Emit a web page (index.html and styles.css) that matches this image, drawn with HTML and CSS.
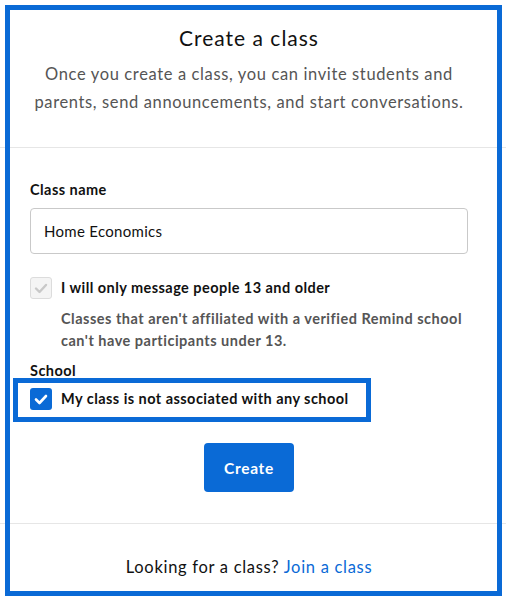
FILE: index.html
```html
<!DOCTYPE html>
<html>
<head>
<meta charset="utf-8">
<link rel="stylesheet" href="styles.css">
</head>
<body>
<div class="page">
  <header class="head">
    <h1 class="title">Create a class</h1>
    <p class="sub">Once you create a class, you can invite students and parents, send announcements, and start conversations.</p>
  </header>
  <section class="form">
    <label class="label">Class name</label>
    <div class="input">Home Economics</div>
    <div class="check-row">
      <span class="box box-disabled">
        <svg width="22" height="22" viewBox="0 0 22 22"><polyline points="6,11.5 9.5,15 16,8" fill="none" stroke="#c8c8c8" stroke-width="2.4" stroke-linecap="round" stroke-linejoin="round"/></svg>
      </span>
      <span class="check-label">I will only message people 13 and older</span>
    </div>
    <p class="help">Classes that aren't affiliated with a verified Remind school can't have participants under 13.</p>
    <div class="label school">School</div>
    <div class="check-row school-row">
      <span class="box box-on">
        <svg width="22" height="22" viewBox="0 0 22 22"><polyline points="6,11.5 9.5,15 16,8" fill="none" stroke="#fff" stroke-width="2.6" stroke-linecap="round" stroke-linejoin="round"/></svg>
      </span>
      <span class="check-label">My class is not associated with any school</span>
    </div>
    <div class="actions"><button class="btn">Create</button></div>
  </section>
  <footer class="foot">Looking for a class? <a class="link">Join a class</a></footer>
  <div class="frame"></div>
  <div class="mark"></div>
</div>
</body>
</html>
```
FILE: styles.css
```css
* { box-sizing: border-box; }
html, body { margin: 0; padding: 0; background: #fff; }
body { font-family: Lato, "Open Sans", sans-serif; color: #111; }
.page { position: relative; width: 506px; height: 602px; overflow: hidden; }
.head { padding: 24px 28px 31px 20px; text-align: center; border-bottom: 1px solid #e6e6e6; }
.title { margin: 0; font-size: 21px; font-weight: 400; line-height: 28px; color: #111; letter-spacing: 1px; }
.sub { margin: 8px auto 0; max-width: 430px; font-size: 16.5px; line-height: 28px; color: #555; letter-spacing: 0.63px; }
.form { padding: 32px 38px 31px 30px; border-bottom: 1px solid #e6e6e6; }
.label { display: block; font-size: 14.5px; font-weight: 700; line-height: 20px; color: #111; letter-spacing: 0.45px; }
.input { margin-top: 8px; height: 46px; border: 1px solid #c9c9c9; border-radius: 4px; padding: 0 13px; font-size: 15px; line-height: 44px; color: #111; letter-spacing: 0.3px; }
.check-row { display: flex; align-items: center; gap: 9px; margin-top: 23px; height: 22px; }
.box { width: 22px; height: 22px; border-radius: 3px; flex: none; display: flex; }
.box-disabled { background: #f4f4f4; border: 1px solid #dcdcdc; }
.box-disabled svg { margin: -1px; }
.box-on { background: #0a6ad6; }
.check-label { font-size: 14.5px; font-weight: 700; color: #111; line-height: 22px; letter-spacing: 0.45px; }
.help { margin: 9px 0 0 31px; max-width: 405px; font-size: 14.5px; font-weight: 700; line-height: 22px; color: #555; letter-spacing: 0.5px; }
.school { margin-top: 9px; }
.school-row { margin-top: 7px; }
.actions { display: flex; justify-content: center; margin-top: 33px; }
.btn { width: 90px; height: 49px; border: 0; border-radius: 4px; background: #0a6ad6; color: #fff; font-family: inherit; font-size: 15.5px; font-weight: 700; letter-spacing: 0.7px; }
.foot { padding: 31px 8px 0 0; text-align: center; font-size: 16.5px; line-height: 24px; color: #111; letter-spacing: 0.7px; }
.link { color: #0a6ad6; }
.frame { position: absolute; left: 5px; top: 5px; width: 497px; height: 591px; border: 5px solid #0a6ad6; }
.mark { position: absolute; left: 13px; top: 378px; width: 358px; height: 44px; border: 5px solid #0a6ad6; }
```
